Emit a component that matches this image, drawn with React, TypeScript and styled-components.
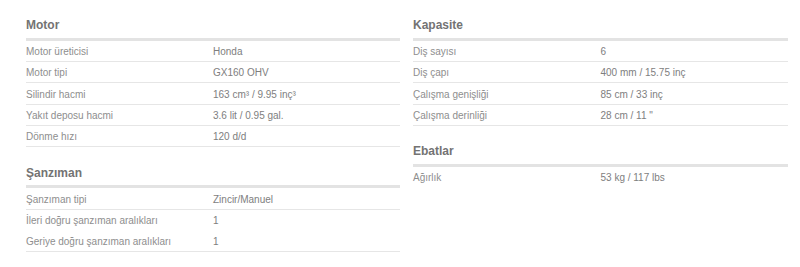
import React from "react";
import styled, { createGlobalStyle } from "styled-components";

const Global = createGlobalStyle`
  html, body { margin: 0; padding: 0; background: #ffffff; }
  body { font-family: "Liberation Sans", Arial, sans-serif; }
`;

const Page = styled.div`
  display: grid;
  grid-template-columns: 374px 375px;
  column-gap: 13px;
  padding: 17px 0 0 26px;
  align-items: start;
`;

const Column = styled.div`
  display: flex;
  flex-direction: column;
  gap: 17.5px;
`;

const Section = styled.section`
  display: flex;
  flex-direction: column;
`;

const Title = styled.h2`
  margin: 0;
  font-size: 12px;
  line-height: 16px;
  font-weight: bold;
  color: #737373;
  padding-bottom: 4.75px;
  border-bottom: 3px solid #e3e3e3;
`;

const Row = styled.div<{ $noBorder?: boolean }>`
  display: grid;
  grid-template-columns: 50% 50%;
  align-items: center;
  box-sizing: border-box;
  height: 21.25px;
  padding-top: 1.5px;
  border-bottom: 1px solid ${(p) => (p.$noBorder ? "transparent" : "#e6e6e6")};
  font-size: 10px;
`;

const Label = styled.span`
  color: #8e8e8e;
`;

const Value = styled.span`
  color: #7e7e7e;
`;

type Spec = { label: string; value: string; noBorder?: boolean };

const SpecSection = ({ title, rows }: { title: string; rows: Spec[] }) => (
  <Section>
    <Title>{title}</Title>
    {rows.map((r) => (
      <Row key={r.label} $noBorder={r.noBorder}>
        <Label>{r.label}</Label>
        <Value>{r.value}</Value>
      </Row>
    ))}
  </Section>
);

export default function App() {
  return (
    <>
      <Global />
      <Page>
        <Column>
          <SpecSection
            title="Motor"
            rows={[
              { label: "Motor üreticisi", value: "Honda" },
              { label: "Motor tipi", value: "GX160 OHV" },
              { label: "Silindir hacmi", value: "163 cm³ / 9.95 inç³" },
              { label: "Yakıt deposu hacmi", value: "3.6 lit / 0.95 gal." },
              { label: "Dönme hızı", value: "120 d/d" },
            ]}
          />
          <SpecSection
            title="Şanzıman"
            rows={[
              { label: "Şanzıman tipi", value: "Zincir/Manuel" },
              { label: "İleri doğru şanzıman aralıkları", value: "1", noBorder: true },
              { label: "Geriye doğru şanzıman aralıkları", value: "1" },
            ]}
          />
        </Column>
        <Column>
          <SpecSection
            title="Kapasite"
            rows={[
              { label: "Diş sayısı", value: "6" },
              { label: "Diş çapı", value: "400 mm / 15.75 inç" },
              { label: "Çalışma genişliği", value: "85 cm / 33 inç" },
              { label: "Çalışma derinliği", value: "28 cm / 11 \"" },
            ]}
          />
          <SpecSection
            title="Ebatlar"
            rows={[{ label: "Ağırlık", value: "53 kg / 117 lbs", noBorder: true }]}
          />
        </Column>
      </Page>
    </>
  );
}
